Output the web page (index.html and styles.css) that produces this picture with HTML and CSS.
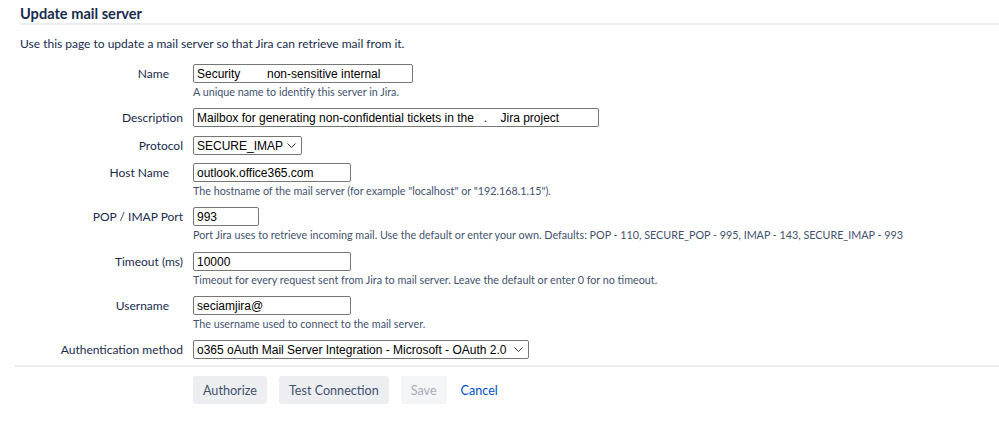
FILE: index.html
```html
<!doctype html>
<html lang="en">
  <head>
    <meta charset="UTF-8" />
    <meta name="viewport" content="width=device-width, initial-scale=1" />
    <title>Update mail server</title>
    <link rel="stylesheet" href="styles.css">
  </head>
  <body>
    <div class="page">
      <h2 class="page-title">Update mail server</h2>
      <p class="intro">Use this page to update a mail server so that Jira can retrieve mail from it.</p>

      <form id="mailServerForm" class="mail-form">
        <div class="field">
          <label for="name" class="required">Name</label>
          <div class="control">
            <input type="text" id="name" class="text w-name" value="Security        non-sensitive internal" />
            <div class="hint">A unique name to identify this server in Jira.</div>
          </div>
        </div>

        <div class="field">
          <label for="description">Description</label>
          <div class="control">
            <input type="text" id="description" class="text w-desc" value="Mailbox for generating non-confidential tickets in the   .    Jira project" />
          </div>
        </div>

        <div class="field tight">
          <label for="protocol">Protocol</label>
          <div class="control">
            <div class="select w-proto" id="protocol">
              <span>SECURE_IMAP</span>
              <svg width="9" height="5" viewBox="0 0 9 5"><path d="M0.5 0.5l4 4 4-4" fill="none" stroke="#333" stroke-width="1"/></svg>
            </div>
          </div>
        </div>

        <div class="field">
          <label for="host" class="required">Host Name</label>
          <div class="control">
            <input type="text" id="host" class="text w-mid" value="outlook.office365.com" />
            <div class="hint">The hostname of the mail server (for example "localhost" or "192.168.1.15").</div>
          </div>
        </div>

        <div class="field loose">
          <label for="port">POP / IMAP Port</label>
          <div class="control">
            <input type="text" id="port" class="text w-port" value="993" />
            <div class="hint">Port Jira uses to retrieve incoming mail. Use the default or enter your own. Defaults: POP - 110, SECURE_POP - 995, IMAP - 143, SECURE_IMAP - 993</div>
          </div>
        </div>

        <div class="field">
          <label for="timeout">Timeout (ms)</label>
          <div class="control">
            <input type="text" id="timeout" class="text w-mid" value="10000" />
            <div class="hint">Timeout for every request sent from Jira to mail server. Leave the default or enter 0 for no timeout.</div>
          </div>
        </div>

        <div class="field">
          <label for="username" class="required">Username</label>
          <div class="control">
            <input type="text" id="username" class="text w-mid" value="seciamjira@" />
            <div class="hint">The username used to connect to the mail server.</div>
          </div>
        </div>

        <div class="field last">
          <label for="auth">Authentication method</label>
          <div class="control">
            <div class="select w-auth" id="auth">
              <span>o365 oAuth Mail Server Integration - Microsoft - OAuth 2.0</span>
              <svg width="9" height="5" viewBox="0 0 9 5"><path d="M0.5 0.5l4 4 4-4" fill="none" stroke="#333" stroke-width="1"/></svg>
            </div>
          </div>
        </div>

        <div class="buttons">
          <button type="button" class="btn">Authorize</button>
          <button type="button" class="btn">Test Connection</button>
          <button type="submit" class="btn" disabled>Save</button>
          <a href="#" class="cancel">Cancel</a>
        </div>
      </form>
    </div>
  </body>
</html>
```

FILE: styles.css
```css
body {
  margin: 0;
  background: #fff;
  font-family: Lato, "Open Sans", sans-serif;
  color: #172b4d;
}
.page {
  padding: 4px 0 0 0;
}
.page-title {
  margin: 0 0 0 20px;
  font-size: 14.6px;
  font-weight: 700;
  line-height: 19px;
  border-bottom: 2px solid #ebecf0;
}
.intro {
  margin: 9px 0 10px 20px;
  font-size: 12px;
  line-height: 20px;
}
.mail-form {
  margin: 0;
}
.field {
  display: grid;
  grid-template-columns: 183px 1fr;
  column-gap: 10px;
  margin-bottom: 9px;
}
.field.tight {
  margin-bottom: 8px;
}
.field.loose {
  margin-bottom: 10px;
}
.field.last {
  margin-bottom: 6px;
}
.field label {
  text-align: right;
  font-size: 12px;
  line-height: 19px;
  color: #172b4d;
}
.field label.required {
  padding-right: 14px;
}
.text {
  box-sizing: border-box;
  display: block;
  height: 19px;
  margin: 0;
  padding: 0 3px;
  border: 1px solid #767676;
  border-radius: 2px;
  font-family: "Liberation Sans", Arial, sans-serif;
  font-size: 12px;
  color: #000;
}
.w-name { width: 220px; }
.w-desc { width: 406px; }
.w-mid { width: 158px; }
.w-port { width: 66px; }
.select {
  box-sizing: border-box;
  display: flex;
  align-items: center;
  justify-content: space-between;
  height: 19px;
  padding: 0 5px 0 3px;
  border: 1px solid #767676;
  border-radius: 2px;
  font-family: "Liberation Sans", Arial, sans-serif;
  font-size: 12px;
  color: #000;
  white-space: nowrap;
}
.w-proto { width: 109px; }
.w-auth { width: 336px; }
.hint {
  margin-top: 1px;
  font-size: 10.75px;
  line-height: 15px;
  color: #42526e;
}
.buttons {
  display: flex;
  align-items: center;
  gap: 12px;
  margin: 0 0 0 15px;
  padding: 9px 0 0 178px;
  border-top: 2px solid #ebecf0;
}
.btn {
  height: 28px;
  padding: 0 10px;
  border: none;
  border-radius: 3px;
  background: #eceef1;
  color: #42526e;
  font-family: Lato, "Open Sans", sans-serif;
  font-size: 12.6px;
  cursor: pointer;
}
.btn:disabled {
  background: #f4f5f7;
  color: #a5adba;
  cursor: default;
}
.cancel {
  color: #0052cc;
  font-size: 12.6px;
  text-decoration: none;
  margin-left: 2px;
}
```
